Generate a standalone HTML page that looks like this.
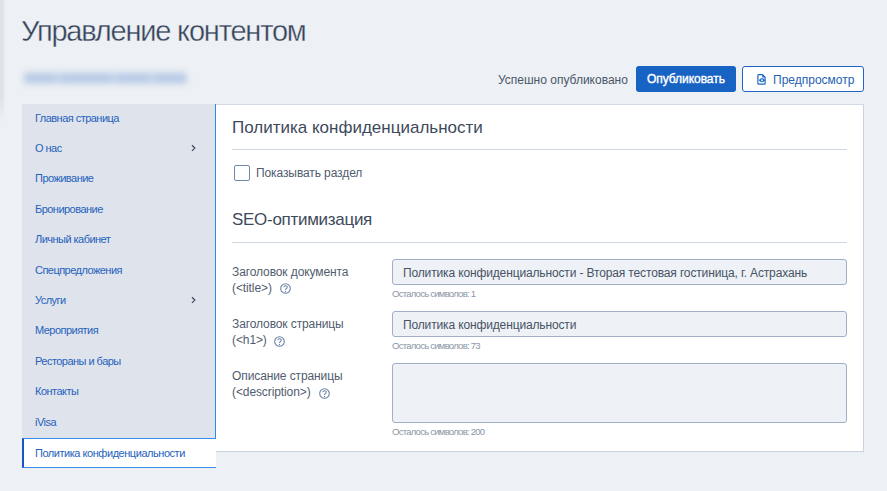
<!DOCTYPE html>
<html><head><meta charset="utf-8">
<style>
*{box-sizing:border-box;margin:0;padding:0}
html,body{width:887px;height:491px;overflow:hidden;background:#edf0f4;font-family:"Liberation Sans",sans-serif}
.a{position:absolute;white-space:nowrap;line-height:1}
#shadow{position:absolute;left:0;top:0;width:6px;height:122px;background:linear-gradient(to right,#e2e5e9,#dcdfe4 25%,#edf0f4);-webkit-mask-image:linear-gradient(to bottom,#000 80%,transparent)}
#title{left:21px;top:17px;font-size:29px;color:#36445a;letter-spacing:-1.2px;-webkit-text-stroke:0.35px #edf0f4}
#url{position:absolute;left:24px;top:72px;width:162px;height:12px;background:#c9d7eb;filter:blur(3px)}#url i{position:absolute;top:2px;height:9px;background:#b8cbe6;border-radius:4px}
#status{left:498px;top:74px;font-size:12px;color:#4b5669}
.btn{position:absolute;top:66px;height:26px;border-radius:3px}
#pub{left:636px;width:100px;background:#1763c4}
#pubt{left:647px;top:73px;font-size:12px;font-weight:normal;color:#fff;letter-spacing:-0.05px;-webkit-text-stroke:0.4px #fff}
#prev{left:742px;width:122px;background:#fff;border:1px solid #1f66c4}
#prevt{left:773px;top:74px;font-size:12px;color:#2361b5}
#side{position:absolute;left:22px;top:104px;width:194px;height:334px;background:#dfe3eb;border-right:1px solid #2b8af0}
.si{position:absolute;left:35px;font-size:11px;color:#2562bd;letter-spacing:-0.53px}
.chev{position:absolute;left:190px;width:7px;height:8px}
#act{position:absolute;left:22px;top:438px;width:194px;height:30px;background:#fff;border-top:1px solid #3a90f0;border-bottom:1px solid #3a90f0;border-left:2px solid #1458bf}
#panel{position:absolute;left:216px;top:104px;width:648px;height:348px;background:#fff;border-top:1px solid #d3dae4;border-right:1px solid #c9d2de;border-bottom:1px solid #c9d2de}
#pline{position:absolute;left:215px;top:104px;width:1px;height:334px;background:#2b8af0}
.h{font-size:17px;color:#3e4a5c}
.hr{position:absolute;left:232px;width:615px;height:1px;background:#d0d8e3}
#cb{position:absolute;left:234px;top:165px;width:16px;height:16px;border:1px solid #7088a8;border-radius:2px;background:#fff}
.lab{font-size:12px;color:#515c6e;letter-spacing:-0.1px}
.inp{position:absolute;left:392px;width:455px;background:#eef1f5;border:1px solid #9fb0c6;border-radius:3px}
.it{font-size:12px;color:#475366;letter-spacing:-0.14px}
.cnt{font-size:9.5px;color:#8b96a6;letter-spacing:-0.74px}
.q{position:absolute;width:11px;height:11px}
</style></head><body>
<div id="shadow"></div>
<div class="a" id="title">Управление контентом</div>
<div id="url"><i style="left:0;width:32px"></i><i style="left:36px;width:52px"></i><i style="left:92px;width:34px"></i><i style="left:130px;width:33px"></i></div>
<div class="a" id="status">Успешно опубликовано</div>
<div class="btn" id="pub"></div>
<div class="a" id="pubt">Опубликовать</div>
<div class="btn" id="prev"></div>
<svg style="position:absolute;left:756px;top:73px" width="11" height="12" viewBox="0 0 11 12">
<path d="M2.5 1.7 H6.5 L9.1 4.3 V10.5 Q9.1 11.1 8.5 11.1 H2.5 Q1.9 11.1 1.9 10.5 V2.3 Q1.9 1.7 2.5 1.7 Z" fill="none" stroke="#1f66c4" stroke-width="1.2"/>
<path d="M6.2 1.7 L9.1 4.6 H6.2 Z" fill="#1f66c4"/>
<path d="M3.1 7.2 Q6 3.9 8.9 7.2 Q6 10.5 3.1 7.2 Z" fill="#1f66c4" stroke="#1f66c4" stroke-width="0.7"/>
<circle cx="6" cy="7.2" r="0.9" fill="#fff"/>
</svg>
<div class="a" id="prevt">Предпросмотр</div>

<div id="side"></div>
<div id="panel"></div>
<div id="pline"></div>
<div id="act"></div>

<div class="a si" style="top:113px">Главная страница</div>
<div class="a si" style="top:143px">О нас</div>
<div class="a si" style="top:173px">Проживание</div>
<div class="a si" style="top:204px">Бронирование</div>
<div class="a si" style="top:234px">Личный кабинет</div>
<div class="a si" style="top:265px">Спецпредложения</div>
<div class="a si" style="top:295px">Услуги</div>
<div class="a si" style="top:325px">Мероприятия</div>
<div class="a si" style="top:356px">Рестораны и бары</div>
<div class="a si" style="top:386px">Контакты</div>
<div class="a si" style="top:417px">iVisa</div>
<div class="a si" style="top:448px;letter-spacing:-0.46px">Политика конфиденциальности</div>
<svg class="chev" style="top:144px" viewBox="0 0 7 8"><path d="M2 1.3 L4.8 4.1 L2 6.9" fill="none" stroke="#3d4c62" stroke-width="1.25"/></svg>
<svg class="chev" style="top:296px" viewBox="0 0 7 8"><path d="M2 1.3 L4.8 4.1 L2 6.9" fill="none" stroke="#3d4c62" stroke-width="1.25"/></svg>

<div class="a h" style="left:232px;top:119px">Политика конфиденциальности</div>
<div class="hr" style="top:149px"></div>
<div id="cb"></div>
<div class="a lab" style="left:256px;top:167px">Показывать раздел</div>
<div class="a h" style="left:232px;top:211px;letter-spacing:-0.29px">SEO-оптимизация</div>
<div class="hr" style="top:242px"></div>

<div class="a lab" style="left:232px;top:266px">Заголовок документа</div>
<div class="a lab" style="left:232px;top:282px">(&lt;title&gt;)</div>
<svg class="q" style="left:280px;top:283px" viewBox="0 0 11 11"><circle cx="5.5" cy="5.5" r="4.8" fill="none" stroke="#6c84a7" stroke-width="1.1"/><path d="M3.8 4.2 Q3.9 2.8 5.5 2.8 Q7.2 2.8 7.2 4.2 Q7.2 5.1 6.2 5.7 Q5.5 6.1 5.5 7.1" fill="none" stroke="#6c84a7" stroke-width="1.05"/><circle cx="5.5" cy="8.5" r="0.7" fill="#6c84a7"/></svg>
<div class="inp" style="top:259px;height:26px"></div>
<div class="a it" style="left:403px;top:267px">Политика конфиденциальности - Вторая тестовая гостиница, г. Астрахань</div>
<div class="a cnt" style="left:392px;top:289px">Осталось символов: 1</div>

<div class="a lab" style="left:232px;top:318px">Заголовок страницы</div>
<div class="a lab" style="left:232px;top:334px">(&lt;h1&gt;)</div>
<svg class="q" style="left:274px;top:336px" viewBox="0 0 11 11"><circle cx="5.5" cy="5.5" r="4.8" fill="none" stroke="#6c84a7" stroke-width="1.1"/><path d="M3.8 4.2 Q3.9 2.8 5.5 2.8 Q7.2 2.8 7.2 4.2 Q7.2 5.1 6.2 5.7 Q5.5 6.1 5.5 7.1" fill="none" stroke="#6c84a7" stroke-width="1.05"/><circle cx="5.5" cy="8.5" r="0.7" fill="#6c84a7"/></svg>
<div class="inp" style="top:311px;height:26px"></div>
<div class="a it" style="left:403px;top:319px">Политика конфиденциальности</div>
<div class="a cnt" style="left:392px;top:341px">Осталось символов: 73</div>

<div class="a lab" style="left:232px;top:370px">Описание страницы</div>
<div class="a lab" style="left:232px;top:386px">(&lt;description&gt;)</div>
<svg class="q" style="left:319px;top:388px" viewBox="0 0 11 11"><circle cx="5.5" cy="5.5" r="4.8" fill="none" stroke="#6c84a7" stroke-width="1.1"/><path d="M3.8 4.2 Q3.9 2.8 5.5 2.8 Q7.2 2.8 7.2 4.2 Q7.2 5.1 6.2 5.7 Q5.5 6.1 5.5 7.1" fill="none" stroke="#6c84a7" stroke-width="1.05"/><circle cx="5.5" cy="8.5" r="0.7" fill="#6c84a7"/></svg>
<div class="inp" style="top:363px;height:60px"></div>
<div class="a cnt" style="left:392px;top:427px">Осталось символов: 200</div>
</body></html>
